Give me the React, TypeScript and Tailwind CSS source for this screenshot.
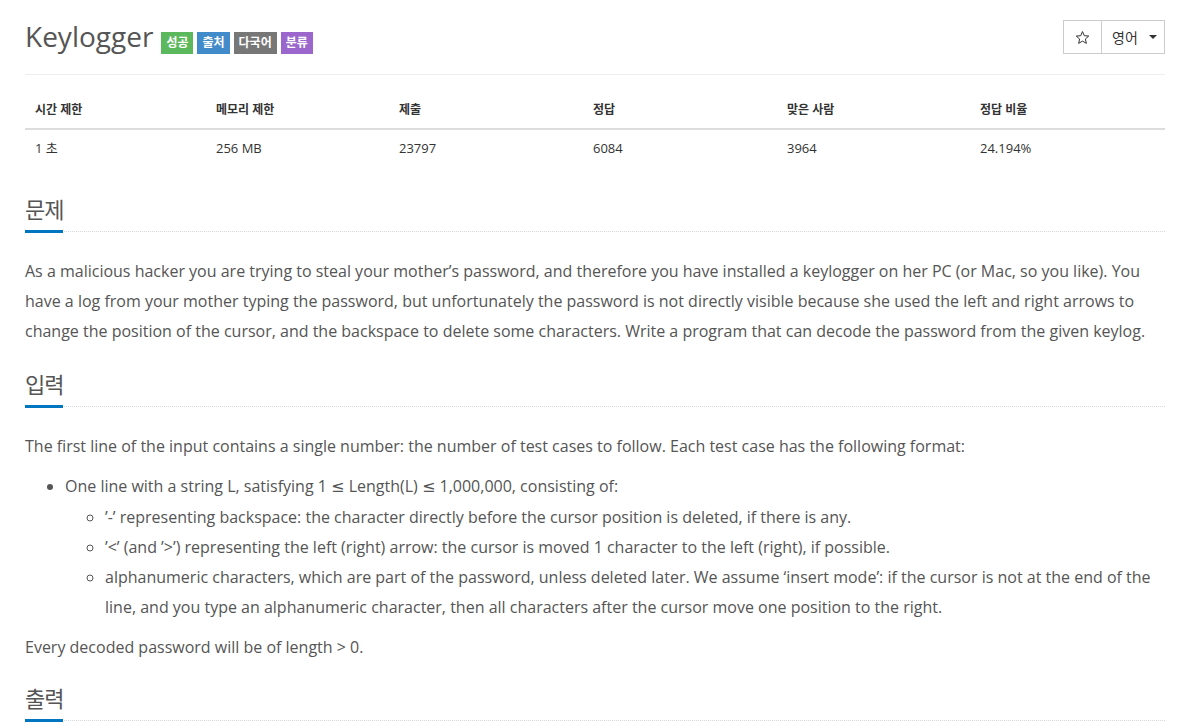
import React from 'react'

const FONT = "font-['Open_Sans','Noto_Sans_CJK_KR',sans-serif]"

const stats = [
  { label: '시간 제한', value: '1 초', width: 'w-[181px]' },
  { label: '메모리 제한', value: '256 MB', width: 'w-[183px]' },
  { label: '제출', value: '23797', width: 'w-[194px]' },
  { label: '정답', value: '6084', width: 'w-[194px]' },
  { label: '맞은 사람', value: '3964', width: 'w-[193px]' },
  { label: '정답 비율', value: '24.194%', width: 'w-[195px]' },
]

const labels = [
  { text: '성공', color: 'bg-[#5cb85c]' },
  { text: '출처', color: 'bg-[#428bca]' },
  { text: '다국어', color: 'bg-[#777777]' },
  { text: '분류', color: 'bg-[#9b67cc]' },
]

function Headline({ title, spacing }: { title: string; spacing: string }) {
  return (
    <div
      className={`${spacing} mb-[24px] border-b border-dotted border-[#d3dae3]`}
    >
      <h2 className="mb-[-2px] inline-block border-b-[3px] border-[#0076c0] pb-[8px] text-[22px] leading-[26px] font-normal tracking-[-1px] text-[#555]">
        {title}
      </h2>
    </div>
  )
}

function StarIcon() {
  return (
    <svg width="15" height="15" viewBox="0 0 24 24" fill="none">
      <path
        d="M12 2.5l2.9 6.6 7.1.6-5.4 4.7 1.6 7-6.2-3.7-6.2 3.7 1.6-7L2 9.7l7.1-.6z"
        stroke="#333"
        strokeWidth="1.6"
      />
    </svg>
  )
}

export default function App() {
  return (
    <div className={`${FONT} min-h-screen bg-white`}>
      <div className="ml-[25px] w-[1140px]">
        <div className="flex items-start justify-between border-b border-[#eeeeee] pt-[20px] pb-[20px]">
          <div className="flex h-[33px] items-start">
            <h1 className="text-[28px] leading-[33px] font-normal text-[#555]">
              Keylogger
            </h1>
            <div className="mt-[12px] ml-[8px] flex gap-[4px]">
              {labels.map((l) => (
                <span
                  key={l.text}
                  className={`${l.color} flex h-[22px] items-center px-[5px] text-[12px] font-bold text-white`}
                >
                  {l.text}
                </span>
              ))}
            </div>
          </div>
          <div className="flex h-[34px] border border-[#cccccc] text-[14px] text-[#333]">
            <button className="flex w-[38px] items-center justify-center border-r border-[#cccccc]">
              <StarIcon />
            </button>
            <button className="flex w-[62px] items-center gap-[11px] pl-[10px]">
              <span>영어</span>
              <span className="h-0 w-0 border-t-[4px] border-r-[4px] border-l-[4px] border-t-[#333] border-r-transparent border-l-transparent" />
            </button>
          </div>
        </div>

        <table className="mt-[17px] w-full table-fixed border-collapse text-[13px] text-[#333]">
          <thead>
            <tr>
              {stats.map((s) => (
                <th
                  key={s.label}
                  className={`${s.width} border-b-2 border-[#dddddd] py-[8px] pl-[10px] text-left text-[12px] leading-[20px] font-bold`}
                >
                  {s.label}
                </th>
              ))}
            </tr>
          </thead>
          <tbody>
            <tr>
              {stats.map((s) => (
                <td key={s.label} className="py-[8px] pl-[10px] leading-[20px]">
                  {s.value}
                </td>
              ))}
            </tr>
          </tbody>
        </table>

        <Headline title="문제" spacing="mt-[30px]" />
        <div className="text-[16px] leading-[30px] text-[#555]">
          <p className="mb-[10px]">
            As a malicious hacker you are trying to steal your mother’s
            password, and therefore you have installed a keylogger on her PC
            (or Mac, so you like). You have a log from your mother typing the
            password, but unfortunately the password is not directly visible
            because she used the left and right arrows to change the position
            of the cursor, and the backspace to delete some characters. Write a
            program that can decode the password from the given keylog.
          </p>
        </div>

        <Headline title="입력" spacing="mt-[25px]" />
        <div className="text-[16px] leading-[30px] text-[#555]">
          <p className="mb-[10px]">
            The first line of the input contains a single number: the number of
            test cases to follow. Each test case has the following format:
          </p>
          <ul className="mb-[10px] list-disc pl-[40px]">
            <li>
              One line with a string L, satisfying 1{' '}
              <span className="font-['DejaVu_Sans',sans-serif]">≤</span>{' '}
              Length(L){' '}
              <span className="font-['DejaVu_Sans',sans-serif]">≤</span>{' '}
              1,000,000, consisting of:
              <ul className="list-[circle] pl-[40px]">
                <li>
                  ’-’ representing backspace: the character directly before the
                  cursor position is deleted, if there is any.
                </li>
                <li>
                  ’&lt;’ (and ’&gt;’) representing the left (right) arrow: the
                  cursor is moved 1 character to the left (right), if possible.
                </li>
                <li>
                  alphanumeric characters, which are part of the password,
                  unless deleted later. We assume ‘insert mode’: if the cursor
                  is not at the end of the line, and you type an alphanumeric
                  character, then all characters after the cursor move one
                  position to the right.
                </li>
              </ul>
            </li>
          </ul>
          <p className="mb-[10px]">
            Every decoded password will be of length &gt; 0.
          </p>
        </div>

        <Headline title="출력" spacing="mt-[23px]" />
      </div>
    </div>
  )
}
